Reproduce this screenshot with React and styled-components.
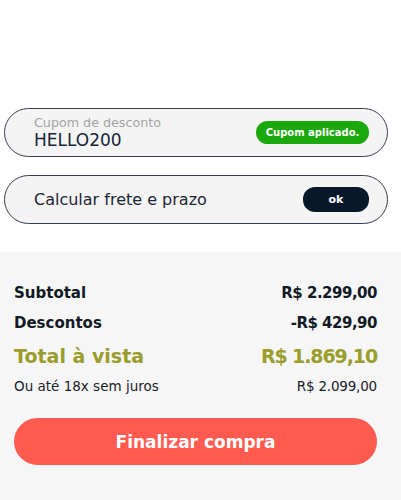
import React from "react";
import styled, { createGlobalStyle } from "styled-components";

const GlobalStyle = createGlobalStyle`
  html, body {
    margin: 0;
    padding: 0;
    background: #ffffff;
    font-family: "DejaVu Sans", "Open Sans", sans-serif;
  }
`;

const Page = styled.div`
  width: 401px;
  height: 500px;
  display: flex;
  flex-direction: column;
`;

const Fields = styled.div`
  display: flex;
  flex-direction: column;
  gap: 18px;
  padding: 108px 13px 28px 4px;
`;

const Pill = styled.div`
  height: 49px;
  box-sizing: border-box;
  border: 1.5px solid #34404f;
  border-radius: 25px;
  background: #f4f4f4;
  display: flex;
  align-items: center;
  justify-content: space-between;
  padding: 0 18px 0 29px;
`;

const FieldText = styled.div`
  display: flex;
  flex-direction: column;
`;

const Label = styled.span`
  font-size: 12.7px;
  line-height: 14px;
  color: #a3a3a3;
`;

const Value = styled.span`
  font-size: 17px;
  line-height: 20px;
  color: #172538;
`;

const Placeholder = styled.span`
  font-size: 16px;
  color: #1d2633;
`;

const Tag = styled.button`
  border: none;
  border-radius: 12px;
  height: ${(p) => p.$h}px;
  width: ${(p) => p.$w}px;
  background: ${(p) => p.$bg};
  color: #ffffff;
  font-family: inherit;
  font-weight: 700;
  font-size: ${(p) => p.$fs}px;
  padding: 0;
`;

const Summary = styled.div`
  flex: 1;
  background: #f6f6f6;
  padding: 26px 24px 0 14px;
  display: flex;
  flex-direction: column;
`;

const Row = styled.div`
  display: flex;
  justify-content: space-between;
  align-items: center;
  height: ${(p) => p.$h}px;
  font-size: ${(p) => p.$fs}px;
  font-weight: ${(p) => p.$fw};
  color: ${(p) => p.$color};
`;

const Amount = styled.span`
  letter-spacing: ${(p) => p.$ls || 0}px;
`;

const Checkout = styled.button`
  margin-top: 21px;
  height: 47px;
  width: 100%;
  border: none;
  border-radius: 24px;
  background: #ff5a50;
  color: #ffffff;
  font-family: inherit;
  font-size: 17px;
  font-weight: 700;
`;

export default function App() {
  return (
    <Page>
      <GlobalStyle />
      <Fields>
        <Pill>
          <FieldText>
            <Label>Cupom de desconto</Label>
            <Value>HELLO200</Value>
          </FieldText>
          <Tag $bg="#1ba80c" $w={113} $h={23} $fs={10}>Cupom aplicado.</Tag>
        </Pill>
        <Pill>
          <Placeholder>Calcular frete e prazo</Placeholder>
          <Tag $bg="#08182b" $w={66} $h={25} $fs={11}>ok</Tag>
        </Pill>
      </Fields>
      <Summary>
        <Row $h={30} $fs={15} $fw={700} $color="#111a24">
          <span>Subtotal</span>
          <Amount $ls={-0.5}>R$ 2.299,00</Amount>
        </Row>
        <Row $h={30} $fs={15} $fw={700} $color="#111a24">
          <span>Descontos</span>
          <Amount $ls={-0.5}>-R$ 429,90</Amount>
        </Row>
        <Row $h={36} $fs={19} $fw={700} $color="#9a9d2c">
          <span>Total à vista</span>
          <Amount $ls={-1.1}>R$ 1.869,10</Amount>
        </Row>
        <Row $h={23} $fs={13.5} $fw={400} $color="#1a222c">
          <span>Ou até 18x sem juros</span>
          <Amount $ls={-0.2}>R$ 2.099,00</Amount>
        </Row>
        <Checkout>Finalizar compra</Checkout>
      </Summary>
    </Page>
  );
}
